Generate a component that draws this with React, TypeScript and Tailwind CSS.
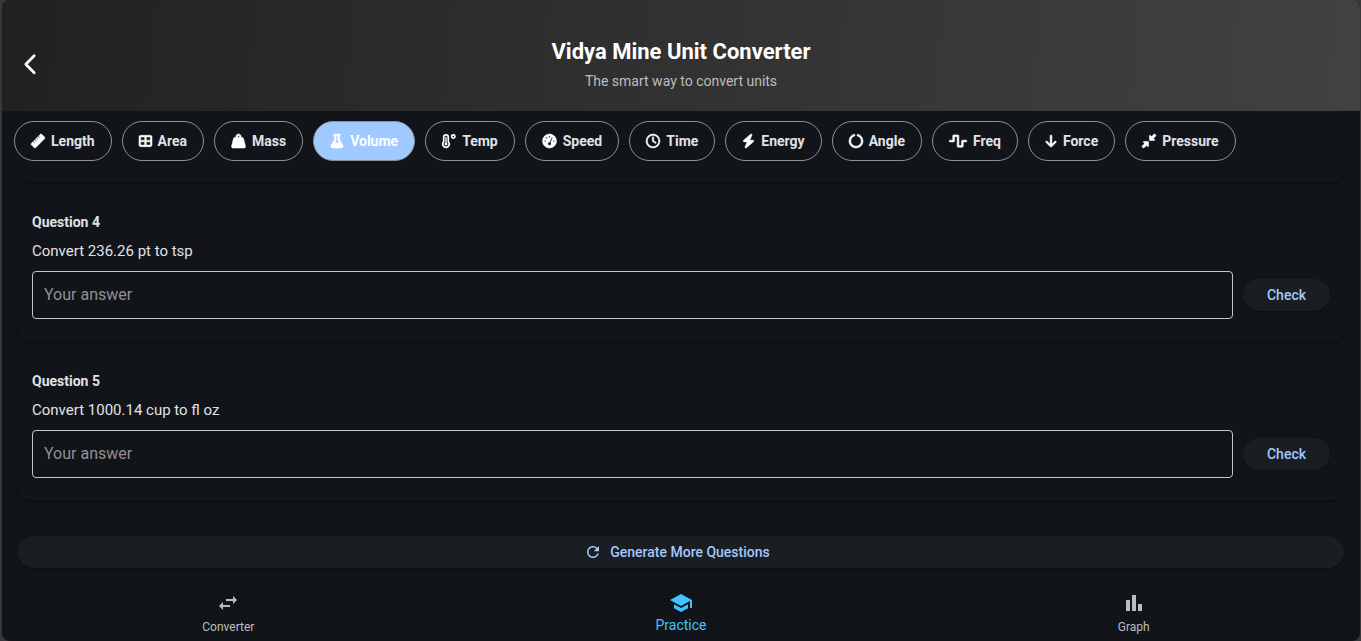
import React from "react";
import type { IconType } from "react-icons";
import { FaWaveSquare } from "react-icons/fa";
import {
  FaBolt,
  FaCircleNotch,
  FaDownLeftAndUpRightToCenter,
  FaFlask,
  FaGaugeHigh,
  FaRegClock,
  FaRuler,
  FaTableCellsLarge,
  FaWeightHanging,
} from "react-icons/fa6";
import { MdBarChart, MdRefresh, MdSchool, MdSwapHoriz } from "react-icons/md";

type IconProps = { className?: string };

function BackChevron({ className }: IconProps) {
  return (
    <svg viewBox="0 0 24 24" className={className} fill="none" stroke="currentColor" aria-hidden="true">
      <path d="M16.2 2.8L7.8 11.3l8.4 8.5" strokeWidth="2.7" strokeLinecap="round" strokeLinejoin="round" />
    </svg>
  );
}

function ThermometerDegree({ className }: IconProps) {
  return (
    <svg viewBox="0 0 512 512" className={className} fill="none" stroke="currentColor" aria-hidden="true">
      <path
        d="M62 117a84 84 0 0 1 168 0v168a117 117 0 1 1-168 0z"
        style={{ strokeWidth: 60 }}
        strokeLinejoin="round"
      />
      <path d="M146 128v200" style={{ strokeWidth: 48 }} strokeLinecap="round" />
      <circle cx="146" cy="370" r="52" fill="currentColor" stroke="none" />
      <circle cx="413" cy="95" r="60" style={{ strokeWidth: 62 }} />
    </svg>
  );
}

function DownArrow({ className }: IconProps) {
  return (
    <svg viewBox="0 0 384 512" className={className} fill="currentColor" stroke="currentColor" aria-hidden="true">
      <path d="M169.4 470.6c12.5 12.5 32.8 12.5 45.3 0l160-160c12.5-12.5 12.5-32.8 0-45.3s-32.8-12.5-45.3 0L224 370.8V64c0-17.7-14.3-32-32-32s-32 14.3-32 32v306.7L54.6 265.4c-12.5-12.5-32.8-12.5-45.3 0s-12.5 32.8 0 45.3l160 160z" />
    </svg>
  );
}

const categories: { name: string; icon: IconType | typeof DownArrow; width: string }[] = [
  { name: "Length", icon: FaRuler, width: "w-3.5" },
  { name: "Area", icon: FaTableCellsLarge, width: "w-[13px]" },
  { name: "Mass", icon: FaWeightHanging, width: "w-[15px]" },
  { name: "Volume", icon: FaFlask, width: "w-3.5" },
  { name: "Temp", icon: ThermometerDegree, width: "w-3.5" },
  { name: "Speed", icon: FaGaugeHigh, width: "w-[15px]" },
  { name: "Time", icon: FaRegClock, width: "w-3.5" },
  { name: "Energy", icon: FaBolt, width: "w-[13px]" },
  { name: "Angle", icon: FaCircleNotch, width: "w-3.5" },
  { name: "Freq", icon: FaWaveSquare, width: "w-[18px]" },
  { name: "Force", icon: DownArrow, width: "w-3" },
  { name: "Pressure", icon: FaDownLeftAndUpRightToCenter, width: "w-3.5" },
];

const questions = [
  { id: 4, text: "Convert 236.26 pt to tsp" },
  { id: 5, text: "Convert 1000.14 cup to fl oz" },
];

function QuestionCard({ id, text }: { id: number; text: string }) {
  return (
    <form
      className="shrink-0 rounded-xl px-3.5 pt-3.5 pb-[22px] shadow-[0_2px_3px_rgba(0,0,0,0.3)]"
      onSubmit={(e) => e.preventDefault()}
    >
      <h2 className="text-sm leading-5 font-bold">Question {id}</h2>
      <label htmlFor={`answer-${id}`} className="mt-[7px] block text-[15px] leading-6">
        {text}
      </label>
      <div className="mt-2 flex items-center gap-2.5">
        <input
          id={`answer-${id}`}
          type="text"
          placeholder="Your answer"
          className="h-12 min-w-0 flex-1 rounded border border-[#c3c6cf] bg-transparent px-[11px] pb-0.5 text-base placeholder:text-[#919191] focus:outline-none"
        />
        <button
          type="submit"
          className="h-8 rounded-full bg-[#1a1d21] px-6 text-sm font-medium text-[#a0c9ff] shadow-[0_1px_1px_rgba(0,0,0,0.3)]"
        >
          Check
        </button>
      </div>
    </form>
  );
}

export default function App() {
  return (
    <div className="h-screen bg-[#383838] pr-px pl-0.5 font-['Roboto',sans-serif] text-[#e1e2e8]">
      <div className="flex h-full flex-col overflow-hidden rounded-lg bg-[#111418]">
        <header className="grid shrink-0 grid-cols-[56px_1fr_56px] items-center bg-linear-[95deg] from-[#212121] to-[#424242] pt-9 pb-[18px]">
          <button type="button" aria-label="Back" className="flex justify-center text-white">
            <BackChevron className="size-6" />
          </button>
          <div className="text-center">
            <h1 className="text-[22px] leading-8 font-bold text-white">Vidya Mine Unit Converter</h1>
            <p className="mt-0.5 text-sm leading-[23px] text-[#bdbdbd]">The smart way to convert units</p>
          </div>
        </header>

        <div className="flex shrink-0 gap-2.5 overflow-hidden px-3 py-2.5">
          {categories.map(({ name, icon: Icon, width }) => {
            const active = name === "Volume";
            return (
              <button
                key={name}
                type="button"
                aria-pressed={active}
                className={`flex h-10 shrink-0 items-center gap-1.5 rounded-full border border-[#8d9199] px-4 text-sm font-bold ${
                  active ? "bg-[#a0c9ff] text-white" : ""
                }`}
              >
                <Icon className={`h-3.5 overflow-visible text-white [stroke-width:20] ${width}`} />
                {name}
              </button>
            );
          })}
        </div>

        <main className="flex min-h-0 flex-1 flex-col justify-end gap-4 overflow-hidden px-4 pb-3.5">
          <div className="min-h-0 flex-1 rounded-b-xl shadow-[0_2px_3px_rgba(0,0,0,0.3)]" />
          {questions.map((q) => (
            <QuestionCard key={q.id} {...q} />
          ))}
          <button
            type="button"
            className="mt-5 flex h-8 shrink-0 items-center justify-center gap-2 rounded-full bg-[#1a1d21] pr-2 text-sm font-medium text-[#a0c9ff] shadow-[0_1px_1px_rgba(0,0,0,0.3)]"
          >
            <MdRefresh className="size-[18px]" />
            Generate More Questions
          </button>
        </main>

        <nav className="grid h-[59px] shrink-0 grid-cols-3 pt-[9px] text-xs text-[#bdbdbd]">
          <a href="#converter" className="flex flex-col items-center">
            <MdSwapHoriz className="size-6" />
            <span className="mt-1 leading-4">Converter</span>
          </a>
          <a href="#practice" aria-current="page" className="flex flex-col items-center text-[#40c4ff]">
            <MdSchool className="size-6" />
            <span className="text-sm leading-5">Practice</span>
          </a>
          <a href="#graph" className="flex flex-col items-center">
            <MdBarChart className="size-6" />
            <span className="mt-1 leading-4">Graph</span>
          </a>
        </nav>
      </div>
    </div>
  );
}
